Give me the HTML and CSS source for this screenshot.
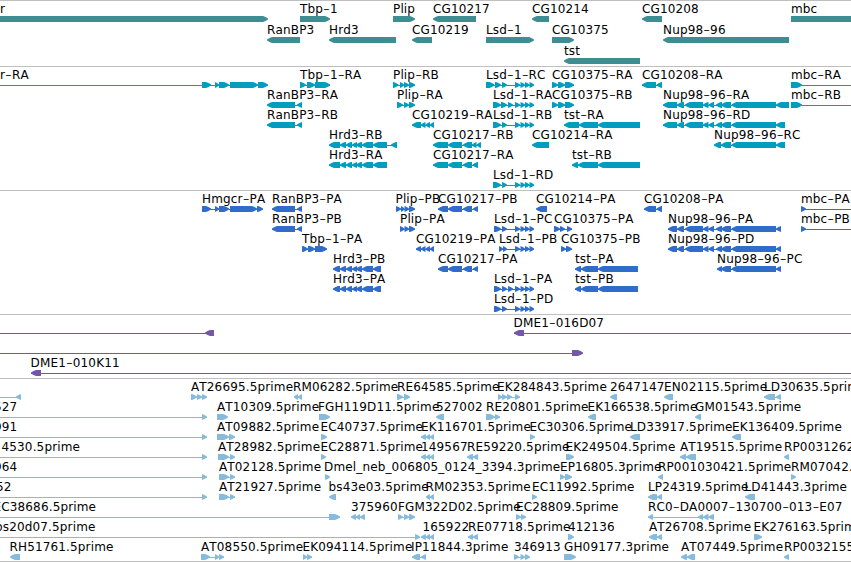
FILE: index.html
```
<!DOCTYPE html>
<html lang="en">
<head>
    <meta charset="UTF-8">
    <meta name="viewport" content="width=device-width, initial-scale=1.0">
    <title>Genome Browser</title>
    <link rel="stylesheet" href="styles.css">
</head>
<body>
    <main class="browser">
        <section class="track track-genes"><svg id="genes"></svg></section>
        <section class="track track-transcripts"><svg id="transcripts"></svg></section>
        <section class="track track-proteins"><svg id="proteins"></svg></section>
        <section class="track track-clones"><svg id="clones"></svg></section>
        <section class="track track-ests"><svg id="ests"></svg></section>
    </main>
    <script src="tracks.js"></script>
</body>
</html>
```

FILE: styles.css
```
* {
    margin: 0;
    padding: 0;
    box-sizing: border-box;
}

body {
    background: #fff;
    font-family: "DejaVu Sans", Verdana, sans-serif;
    overflow: hidden;
}

.browser {
    display: flex;
    flex-direction: column;
    width: 100%;
    height: 562px;
    border-bottom: 1px solid #bfbfbf;
}

.track {
    border-top: 1px solid #bfbfbf;
    overflow: hidden;
}

.track svg {
    display: block;
    width: 100%;
    height: 100%;
}

.track-genes {
    height: 66px;
    fill: #3e8d93;
}

.track-transcripts {
    height: 124px;
    fill: #009dbf;
}

.track-proteins {
    height: 124px;
    fill: #306cca;
}

.track-clones {
    height: 64px;
    fill: #7557a8;
}

.track-ests {
    height: 183px;
    fill: #87bbdc;
}

.line {
    shape-rendering: crispEdges;
}

.label {
    fill: #000;
    font-size: 12px;
    letter-spacing: 0.15px;
    font-kerning: none;
}

.dash {
    font-size: 19px;
    font-weight: 200;
    letter-spacing: 0;
}
```

FILE: tracks.js
```
// each feature: [row, strand, label, exons, label x (defaults to first exon)]
const lsd = ' 515,520 520.5,525 525,529.5 529.5,534';
const nup = ' 677,684 685,703 703,708.5 708.5,714 716,722 721,731 731.5,776';
const hrd = ' 340,346 346,352 352,357 356,362 362,373';
const three = '421,426 426,430 430,434';

const tracks = {
    genes: { pitch: 21, features: [
        [0, '>', 'r', '-10,268', 0],
        [0, '>', 'Tbp-1', '300,330'],
        [0, '>', 'Plip', '393,415'],
        [0, '<', 'CG10217', '433,476'],
        [0, '<', 'CG10214', '532,549'],
        [0, '<', 'CG10208', '642,662'],
        [0, '>', 'mbc', '791,870'],
        [1, '<', 'RanBP3', '267,300'],
        [1, '<', 'Hrd3', '329,396'],
        [1, '<', 'CG10219', '412,432'],
        [1, '>', 'Lsd-1', '486,534'],
        [1, '>', 'CG10375', '552,574'],
        [1, '<', 'Nup98-96', '663,789'],
        [2, '<', 'tst', '564,640']
    ] },
    transcripts: { pitch: 20, features: [
        [0, '>', 'r-RA', '-10,-10 202,211 215,219 219,229 230,258 258,268', 0],
        [0, '>', 'Tbp-1-RA', '300,306 307,315 315,330'],
        [0, '>', 'Plip-RB', '393,398.5 400,404 404,409 409,415'],
        [0, '>', 'Lsd-1-RC', '486,494.5 495,501 502,507' + lsd],
        [0, '>', 'CG10375-RA', '552,558 558,565 565,574'],
        [0, '<', 'CG10208-RA', '642,656 656.5,662'],
        [0, '>', 'mbc-RA', '791,802 870,870'],
        [1, '<', 'RanBP3-RA', '267,295 297,302'],
        [1, '>', 'Plip-RA', '397,403 404,409 409,415'],
        [1, '>', 'Lsd-1-RA', '493,501 501,507 508,513' + lsd],
        [1, '>', 'CG10375-RB', '552,558 558,565 565,574'],
        [1, '<', 'Nup98-96-RA', '663,677' + nup + ' 776,789'],
        [1, '>', 'mbc-RB', '791,802 870,870'],
        [2, '<', 'RanBP3-RB', '267,295 297,302'],
        [2, '<', 'CG10219-RA', '412,421 421,425.5 425.5,430 430,434'],
        [2, '>', 'Lsd-1-RB', '493,501 502,507' + lsd],
        [2, '<', 'tst-RA', '564,579 579,598 598,640'],
        [2, '<', 'Nup98-96-RD', '663,677' + nup + ' 776,785'],
        [3, '<', 'Hrd3-RB', '329,340' + hrd + ' 373,387 391,397'],
        [3, '<', 'CG10217-RB', '433,448 448,462 463,472 472,476.5 476.5,481'],
        [3, '<', 'CG10214-RA', '532,549'],
        [3, '<', 'Nup98-96-RC', '714,721 721,731 731.5,776 776,785'],
        [4, '<', 'Hrd3-RA', '329,340' + hrd + ' 373,387'],
        [4, '<', 'CG10217-RA', '433,448 448,462 463,472 472.5,478'],
        [4, '<', 'tst-RB', '572,578 578,598 598,640'],
        [5, '>', 'Lsd-1-RD', '493,501 502,507' + lsd]
    ] },
    proteins: { pitch: 20, features: [
        [0, '>', 'Hmgcr-PA', '202,211 215,219 219,229 230,257 257,263'],
        [0, '<', 'RanBP3-PA', '272,295 297,302'],
        [0, '>', 'Plip-PB', '396,401 401,404.5 404.5,409 409,415', 395.5],
        [0, '<', 'CG10217-PB', '438,448 448,462 463,472 473,478'],
        [0, '<', 'CG10214-PA', '536,547'],
        [0, '<', 'CG10208-PA', '644,656 656.5,662'],
        [0, '>', 'mbc-PA', '801,806 870,870'],
        [1, '<', 'RanBP3-PB', '272,295 297,302'],
        [1, '>', 'Plip-PA', '400,404.5 404.5,409 409,415'],
        [1, '>', 'Lsd-1-PC', '494,501 502,507' + lsd],
        [1, '>', 'CG10375-PA', '554,560 560,565 567,572'],
        [1, '<', 'Nup98-96-PA', '668,677' + nup + ' 776,781'],
        [1, '>', 'mbc-PB', '801,806 870,870'],
        [2, '>', 'Tbp-1-PA', '302,308 308,315 315,327'],
        [2, '<', 'CG10219-PA', '416,421 421,425.5 425.5,430 430,434'],
        [2, '>', 'Lsd-1-PB', '499,503 503,507' + lsd],
        [2, '>', 'CG10375-PB', '561,566 566,572'],
        [2, '<', 'Nup98-96-PD', '668,677' + nup + ' 776,781'],
        [3, '<', 'Hrd3-PB', '333,340' + hrd + ' 373,381'],
        [3, '<', 'CG10217-PA', '438,448 448,462 463,472 473,478'],
        [3, '<', 'tst-PA', '575,581 581,598 598,638'],
        [3, '<', 'Nup98-96-PC', '717,722 721,731 731.5,776 776,781'],
        [4, '<', 'Hrd3-PA', '333,340' + hrd + ' 373,381'],
        [4, '>', 'Lsd-1-PA', '494,501 502,507 508,513' + lsd],
        [4, '<', 'tst-PB', '575,581 581,598 598,638'],
        [5, '>', 'Lsd-1-PD', '494,501 502,507' + lsd]
    ] },
    clones: { pitch: 20, features: [
        [0, '<', '', '-10,-10 205,214'],
        [0, '<', 'DME1-016D07', '514,524 870,870', 513.5],
        [1, '>', '', '-10,-10 572,583'],
        [2, '<', 'DME1-010K11', '31,41 870,870', 30.5]
    ] },
    ests: { pitch: 20, features: [
        [0, '<', '', '-10,-10 16,21'],
        [0, '>', 'AT26695.5prime', '191,197 197,202 202,207'],
        [0, '<', 'RM06282.5prime', '294,298 298,302', 293],
        [0, '>', 'RE64585.5prime', '397,403 404,410'],
        [0, '>', 'EK284843.5prime', '498,502 502,507 507,512 515,520', 497],
        [0, '<', '2647147', '610,617'],
        [0, '<', 'EN02115.5prime', '664,673'],
        [0, '<', 'LD30635.5prime', '764,775 776,781'],
        [1, '>', '527', '-10,-10 202,207', -6],
        [1, '>', 'AT10309.5prime', '217,228'],
        [1, '>', 'FGH119D11.5prime', '319,330', 318],
        [1, '<', '527002', '436,444'],
        [1, '>', 'RE20801.5prime', '486,495 495,500'],
        [1, '<', 'EK166538.5prime', '588,596', 587.5],
        [1, '<', 'GM01543.5prime', '695,701'],
        [2, '>', '991', '-10,-10 202,207', -6],
        [2, '>', 'AT09882.5prime', '217,229 229,235'],
        [2, '>', 'EC40737.5prime', '321,327', 320.5],
        [2, '<', 'EK116701.5prime', three],
        [2, '>', 'EC30306.5prime', '530,535', 529.5],
        [2, '<', 'LD33917.5prime', '630,640'],
        [2, '<', 'EK136409.5prime', '732,741'],
        [3, '>', '4530.5prime', '-10,-10 202,207', 1.5],
        [3, '>', 'AT28982.5prime', '218,229 230,235'],
        [3, '>', 'EC28871.5prime', '321,326', 320.5],
        [3, '<', '149567', three],
        [3, '<', 'RE59220.5prime', '467,473 473,478'],
        [3, '>', 'EK249504.5prime', '566,574', 565.5],
        [3, '<', 'AT19515.5prime', '680,686 686,696'],
        [3, '<', 'RP0031262', '784,789'],
        [4, '>', '964', '-10,-10 202,207', -6],
        [4, '>', 'AT02128.5prime', '219,229 230,235'],
        [4, '>', 'Dmel_neb_006805_0124_3394.3prime', '325,330', 324],
        [4, '>', 'EP16805.3prime', '560,565 565,572'],
        [4, '<', 'RP001030421.5prime', '658,663'],
        [4, '>', 'RM07042.', '791,796'],
        [5, '>', '52', '-10,-10 202,207', -4],
        [5, '>', 'AT21927.5prime', '219,229 230,235'],
        [5, '<', 'bs43e03.5prime', '329,336', 328.5],
        [5, '<', 'RM02353.5prime', '426,430 430,434', 425.5],
        [5, '>', 'EC11992.5prime', '532,537'],
        [5, '<', 'LP24319.5prime', '648,657 657,662'],
        [5, '<', 'LD41443.3prime', '745,755', 744.5],
        [6, '>', 'EC38686.5prime', '-10,-10 329,340', -6.5],
        [6, '<', '375960', '351,356 356,360 360,365'],
        [6, '>', 'FGM322D02.5prime', '398,403 404,409 409,415'],
        [6, '>', 'EC28809.5prime', '516,521 521,526'],
        [6, '<', 'RC0-DA0007-130700-013-E07', '648,653 698,703 703,708.5 708.5,714'],
        [7, '>', 'bs20d07.5prime', '-10,-10 415,420', -5],
        [7, '<', '165922', three, 422.5],
        [7, '<', 'RE07718.5prime', '468,473 473,478'],
        [7, '>', '412136', '568,574'],
        [7, '<', 'AT26708.5prime', '649,657 657,662'],
        [7, '>', 'EK276163.5prime', '754,762', 753.5],
        [8, '<', 'RH51761.5prime', '10,20', 9.5],
        [8, '>', 'AT08550.5prime', '201,210 215,219 219,224'],
        [8, '>', 'EK094114.5prime', '303,307 307,312', 302.5],
        [8, '<', 'IP11844.3prime', '412,420 421,426', 411],
        [8, '>', '346913', '514,519 520.5,525 525,530'],
        [8, '>', 'GH09177.3prime', '564,576'],
        [8, '<', 'AT07449.5prime', '681,687 687,695'],
        [8, '<', 'RP0032155', '784,789']
    ] }
};

// block with a slightly rounded arrow tip on the side of the strand
function block(a, b, strand, y) {
    const dir = strand === '>' ? 1 : -1;
    const tail = dir === 1 ? a : b;
    const tip = dir === 1 ? b : a;
    const neck = tip - dir * Math.min(b - a, 5);
    const bend = tip - dir * Math.min(b - a, 5) / 2;
    return `<path d="M${tail} ${y}H${neck}L${bend} ${y + 1}L${tip} ${y + 2.5}V${y + 3.5}L${bend} ${y + 5}L${neck} ${y + 6}H${tail}Z"/>`;
}

for (const id in tracks) {
    let out = '';
    for (const [row, strand, label, exonList, labelX] of tracks[id].features) {
        const base = 12 + row * tracks[id].pitch;
        const exons = exonList.split(' ').map(e => e.split(',').map(Number));
        const start = exons[0][0];
        const end = exons[exons.length - 1][1];

        if (exons.length > 1) {
            out += `<rect class="line" x="${start}" y="${base + 6}" width="${end - start}" height="1"/>`;
        }
        for (const [a, b] of exons) {
            if (b > a) out += block(a, b, strand, base + 3);
        }
        if (label) {
            const x = labelX === undefined ? start : labelX;
            // the dash is set larger, so it is lowered to stay centred
            const text = label.replace(/-(.)/g, '<tspan class="dash" dy="1.5">-</tspan><tspan dy="-1.5">$1</tspan>');
            out += `<text class="label" x="${x}" y="${base}">${text}</text>`;
        }
    }
    document.getElementById(id).innerHTML = out;
}
```
